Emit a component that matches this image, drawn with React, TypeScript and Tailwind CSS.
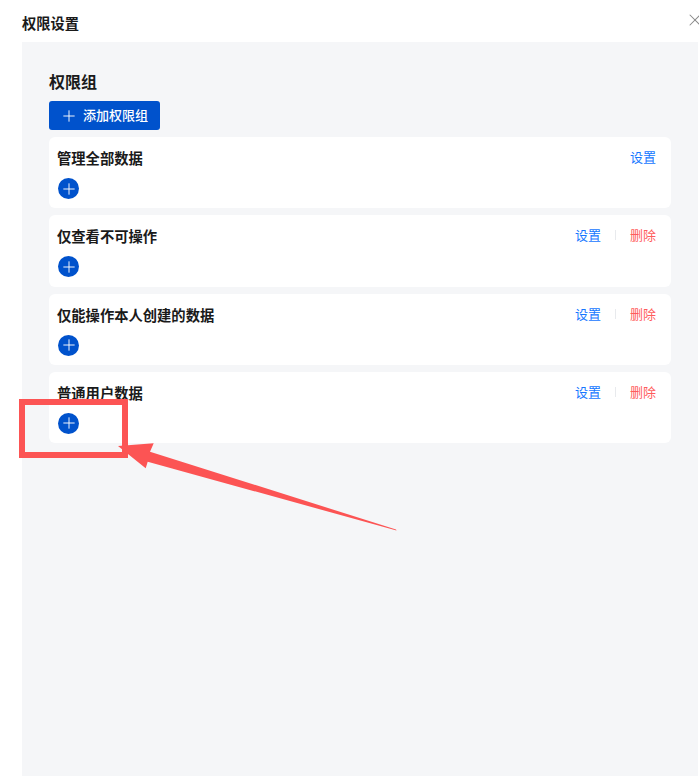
import { Plus, X } from "lucide-react";

const FONT = "[font-family:'Inter','Noto_Sans_CJK_SC',sans-serif]";

const GROUPS = [
  { name: "管理全部数据", canDelete: false },
  { name: "仅查看不可操作", canDelete: true },
  { name: "仅能操作本人创建的数据", canDelete: true },
  { name: "普通用户数据", canDelete: true },
];

function GroupCard({ name, canDelete }: { name: string; canDelete: boolean }) {
  return (
    <div className="h-[71.33px] rounded-md bg-white pl-[8px] pr-[15px] pt-[12px]">
      <div className="flex h-[18px] items-center justify-between">
        <p className="m-0 translate-y-px text-[14.3px] font-semibold leading-[18px] text-[#1a1a1a]">{name}</p>
        <div className="flex -translate-y-px items-center text-[13px] leading-[18px]">
          <span className="text-[#1677ff]">设置</span>
          {canDelete && (
            <>
              <span className="mx-[14px] h-[10px] w-px bg-[#e8eaed]" />
              <span className="text-[#ff5c5c]">删除</span>
            </>
          )}
        </div>
      </div>
      <button className="ml-px mt-[11px] flex h-[21px] w-[21px] items-center justify-center rounded-full bg-[#0052cc] text-white">
        <Plus size={18} strokeWidth={1.25} />
      </button>
    </div>
  );
}

export default function App() {
  return (
    <div className={`relative h-[776px] w-[699px] overflow-hidden bg-white ${FONT}`}>
      <header className="flex h-[42px] items-start justify-between pl-[22px]">
        <h1 className="m-0 mt-[14px] text-[14.25px] font-semibold leading-[20px] text-[#1a1a1a]">权限设置</h1>
        <X size={20} strokeWidth={1.25} className="mr-[-6px] mt-[10px] text-[#8a8a8a]" />
      </header>

      <main className="ml-[22px] mr-px h-[734px] bg-[#f5f6f8] pl-[27px] pr-[27px] pt-[29px]">
        <h2 className="m-0 h-[22px] text-[16px] font-semibold leading-[22px] text-[#1a1a1a]">权限组</h2>
        <button className="mt-[8px] flex h-[29px] w-[111px] items-center gap-[5px] rounded-[3px] bg-[#0052cc] pl-[11px] text-[13px] font-medium text-white">
          <Plus size={18} strokeWidth={1.25} />
          添加权限组
        </button>
        <div className="mt-[7px] flex flex-col gap-[7px]">
          {GROUPS.map((group) => (
            <GroupCard key={group.name} name={group.name} canDelete={group.canDelete} />
          ))}
        </div>
      </main>

      {/* annotation drawn over the screenshot */}
      <div className="absolute left-[19px] top-[399px] h-[59px] w-[109px] border-[6px] border-[#fc5454]" />
      <svg className="absolute left-0 top-0" width="699" height="776" viewBox="0 0 699 776" fill="none">
        <path d="M118 446 L153.7 443.3 L150 451.7 L396 529.5 L396.5 530.5 L147.7 461.7 L145.7 468.3 Z" fill="#fc5454" />
      </svg>
    </div>
  );
}
